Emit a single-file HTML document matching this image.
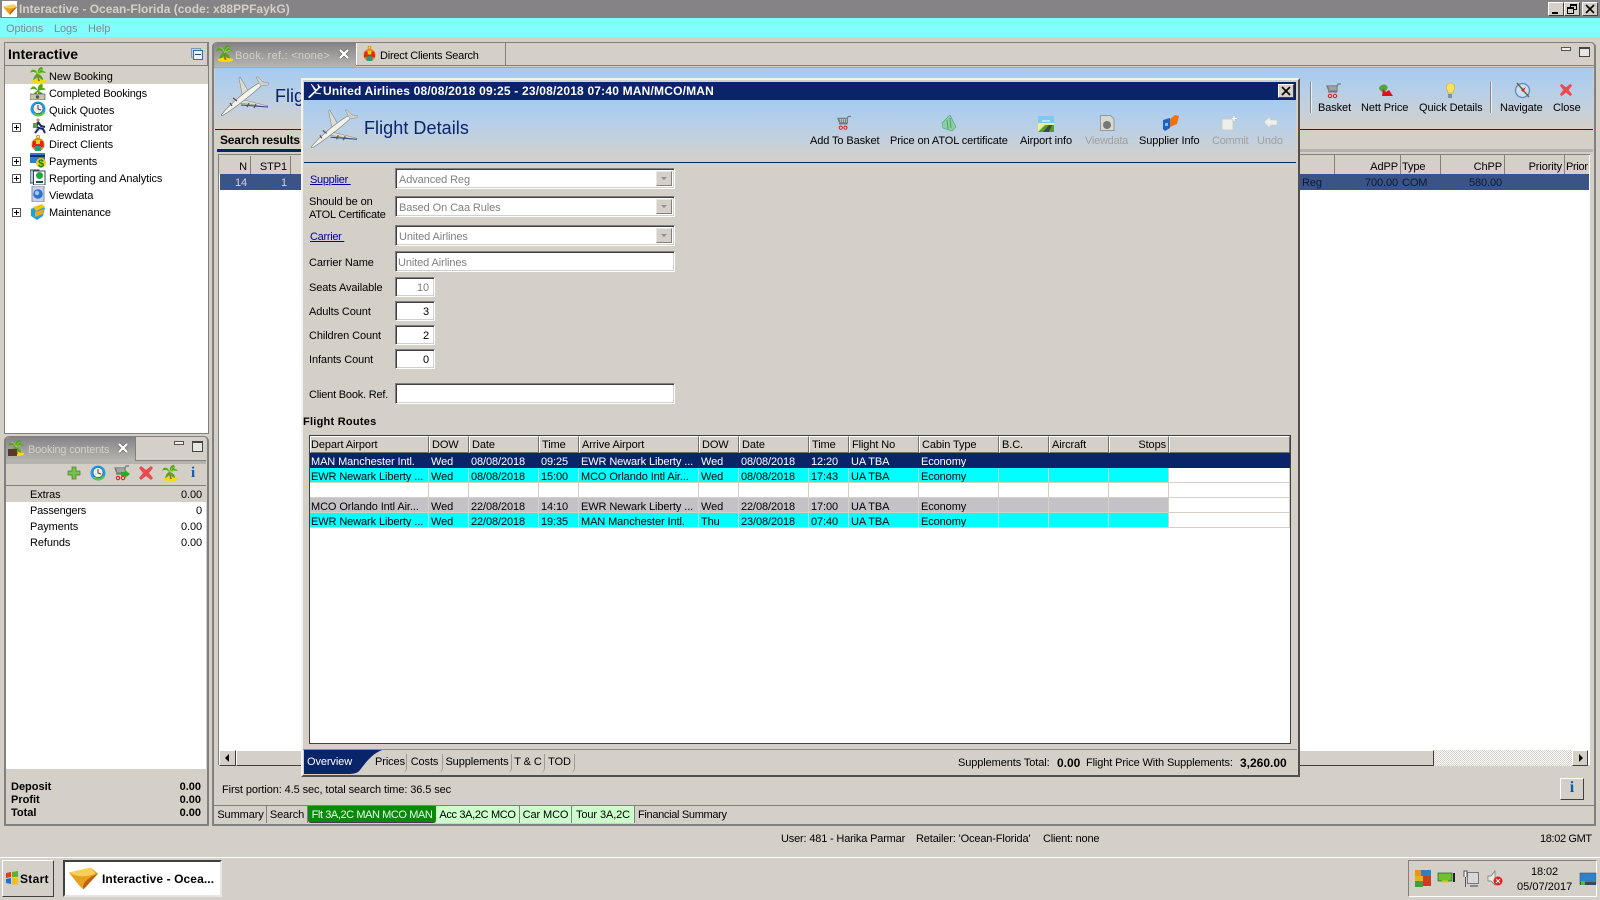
<!DOCTYPE html>
<html><head><meta charset="utf-8"><title>Interactive</title>
<style>
*{box-sizing:border-box}
html,body{margin:0;padding:0;width:1600px;height:900px;overflow:hidden;background:#d4d0c8;font:11px/14px "Liberation Sans",Arial,sans-serif;color:#000}
.a{position:absolute}
.t{position:absolute;white-space:nowrap;line-height:14px;font-size:11px;margin-top:1px;letter-spacing:-.1px}
.m0{margin-top:0}
.b{font-weight:bold;letter-spacing:0}
.r{text-align:right}
.g{color:#808080}
.l{color:#0000a0;text-decoration:underline}
svg{position:absolute;overflow:visible}
.in{position:absolute;background:#fff;border:1px solid;border-color:#808080 #fff #fff #808080;box-shadow:inset 1px 1px 0 #404040,inset -1px -1px 0 #d4d0c8}
.cb{position:absolute;background:#d4d0c8;border:1px solid;border-color:#e8e6e2 #808080 #808080 #e8e6e2;width:16px;height:15px}
.cb:after{content:"";position:absolute;left:4px;top:5px;border:3px solid transparent;border-top:3px solid #909090}
.pl{position:absolute;left:12px;width:9px;height:9px;border:1px solid #555;background:#fff}
.pl:before{content:"";position:absolute;left:1px;top:3px;width:5px;height:1px;background:#000}
.pl:after{content:"";position:absolute;left:3px;top:1px;width:1px;height:5px;background:#000}
.btn{position:absolute;background:#d4d0c8;border:1px solid;border-color:#fff #404040 #404040 #fff}
.hdr{position:absolute;background:linear-gradient(#a6caf0 0%,#b5cfe9 35%,#c6d0da 70%,#d4d0c8 100%)}
table{position:absolute;border-collapse:separate;border-spacing:0;table-layout:fixed}
th,td{font:11px "Liberation Sans",Arial,sans-serif;overflow:hidden;white-space:nowrap;text-align:left;letter-spacing:-.1px}
th{height:17px;background:#d4d0c8;border:1px solid;border-color:#fff #707070 #707070 #fff;font-weight:normal;padding:2px 0 0 0;line-height:13px}
th+th{padding-left:2px}
td{height:15px;border-right:1px solid #d4d0c8;border-bottom:1px solid #d4d0c8;background:#fff;padding:4px 0 0 1px;line-height:10px}
td+td{padding-left:2px}
tr.n td{background:#0a246a;color:#fff;border-color:#0a246a}
tr.c td{background:#0ff}
tr.s td{background:#c4c2c6}
tr td.w{background:#fff}
tr.n td.w{background:#0a246a}
.tab{position:absolute;top:806px;height:17px;line-height:18px;font-size:11px;text-align:center;white-space:nowrap;border-right:1px solid #808080;letter-spacing:-.1px}
.dt{position:absolute;top:754px;height:19px;line-height:16px;text-align:center;white-space:nowrap;border-right:1px solid #a09c94;border-radius:0 0 5px 0;letter-spacing:-.1px}
</style></head><body>
<svg width="0" height="0" style="position:absolute">
<defs>
<symbol id="palm" viewBox="0 0 16 16"><ellipse cx="9" cy="14" rx="7.500" ry="2" fill="#f8dc00"/><path d="M7.500 6l2.500 8H8L6.500 6z" fill="#a06a20"/><path d="M8 7C5 1 2 1 0 6c3-2 5-1 8 1zM8 7c-1-4 1-7 4-7 2 2 0 6-4 7zM8 7c3-4 6-4 8-1-2-.5-5 0-8 1zM8 7c-3 0-4 3-5 6 3-1 5-3 5-6zM8 7c3 1 5 3 5 6-3-1-5-3-5-6z" fill="#50a818"/><path d="M3 3c2-1 3 0 5 4M12 2c-2 1-3 2-4 5M14 5c-2 0-4 1-6 2" stroke="#a8d858" stroke-width=".6" fill="none"/></symbol>
<symbol id="palmm" viewBox="0 0 16 16"><path d="M9 6l1 5H8.500L7.500 6z" fill="#a06a20"/><path d="M8 7C5 1 2 1 0 6c3-2 5-1 8 1zM8 7c-1-4 1-7 4-7 2 2 0 6-4 7zM8 7c3-4 6-4 8-1-2-.5-5 0-8 1zM8 7c-3 0-4 2-4 4 2-1 4-2 4-4zM8 7c3 1 5 2 5 4-3-1-5-2-5-4z" fill="#50a818"/><rect x="0" y="10" width="15" height="6" fill="#c8c8a8" stroke="#444" stroke-width=".6"/><circle cx="7.500" cy="13" r="1.700" fill="#555"/></symbol>
<symbol id="clock" viewBox="0 0 16 16"><circle cx="8" cy="8" r="7.500" fill="#1c9cf0"/><circle cx="8" cy="7.500" r="5" fill="#eeeee4" stroke="#335" stroke-width=".5"/><path d="M8 4v4l3 1" fill="none" stroke="#444" stroke-width="1"/><path d="M3 12c3 5 9 4 12 0l-3-1-1 2c-2 1-4 0-5-1z" fill="#60c828"/></symbol>
<symbol id="gift" viewBox="0 0 16 16"><circle cx="8" cy="9.500" r="6.500" fill="#f08010"/><path d="M3 6h10l1 6H2z" fill="#e02810"/><rect x="5" y="11" width="6" height="5" fill="#20a080"/><circle cx="8" cy="1.800" r="1.500" fill="none" stroke="#e09000"/><path d="M6 5h4v4H6z" fill="#e8d020"/></symbol>
<symbol id="run" viewBox="0 0 16 16"><circle cx="7" cy="2" r="1.600" fill="#c89060"/><path d="M7 4L5 9l3 1-4 5M7 4l3 4 4 1M8 10l4 1 2 4" fill="none" stroke="#182860" stroke-width="2"/><rect x="2" y="5" width="4" height="5" fill="#60a040"/></symbol>
<symbol id="card" viewBox="0 0 16 16"><rect x="0" y="1" width="15" height="10" fill="#2a80d8"/><rect x="0" y="3" width="15" height="2" fill="#10306a"/><circle cx="11" cy="11" r="5" fill="#f0d020"/><text x="11" y="15" font-size="11" font-weight="bold" fill="#108020" text-anchor="middle" font-family="Liberation Sans">$</text></symbol>
<symbol id="rep" viewBox="0 0 16 16"><rect x="0" y="1" width="9" height="13" fill="#b8c8e0" stroke="#345"/><rect x="3.500" y="2" width="11.500" height="14" fill="#fff" stroke="#345"/><circle cx="9.500" cy="6.500" r="3.500" fill="#20a840"/><rect x="6" y="12" width="7" height="2" fill="#205040"/></symbol>
<symbol id="view" viewBox="0 0 16 16"><rect x="2" y="0" width="12" height="16" fill="#c8d0e8" stroke="#8090a8"/><circle cx="8" cy="8" r="4.800" fill="#3070d0"/><circle cx="7" cy="7" r="2.200" fill="#a0c8f0"/></symbol>
<symbol id="box" viewBox="0 0 16 16"><path d="M1 5l9-4 5 3-2 8-6 4-6-4z" fill="#20a0d8"/><path d="M3 3l9-3 3 3-9 4z" fill="#f0c020"/><path d="M5 8l9-3-1 5-8 3z" fill="#f0a818"/></symbol>
<symbol id="plane" viewBox="0 0 48 40"><path d="M29 18L19 1l-1 1 4 21zM23 24l24 6-1 1-27-4z" fill="#dcdcd4" stroke="#8a8a80" stroke-width=".6"/><path d="M0 39C10 27 28 12 40 6c2-1 3 0 2 2C33 17 14 32 1 40z" fill="#f2f2ea" stroke="#777" stroke-width=".6"/><path d="M38 7l-3-6 2 0 5 5 6 1-1 2-7 1z" fill="#d0d0c8" stroke="#8a8a80" stroke-width=".5"/><path d="M20 29L47 31" stroke="#2a4a80" stroke-width="1"/><path d="M11 30l-2-3M16 25l-4-3M28 27l-2 4M35 28l-2 4" stroke="#555" stroke-width="1.300"/></symbol>
<symbol id="planew" viewBox="0 0 16 16"><path d="M1 15L13 4l1 1L3 16zM8 8L4 1l1 0 5 6zM9 10l6 1v1l-7-1zM12 5l-1-4h1l2 3 2 0v1z" fill="#fff"/></symbol>
<symbol id="cart" viewBox="0 0 16 16"><path d="M1 3h10v5H3zM2 9h9M11 3l1-2h3" fill="none" stroke="#777" stroke-width="1.300"/><path d="M3 4v4M5 4v4M7 4v4M9 4v4" stroke="#777"/><circle cx="4" cy="13" r="1.700" fill="none" stroke="#e01010"/><circle cx="9" cy="13" r="1.700" fill="none" stroke="#e01010"/></symbol>
<symbol id="x" viewBox="0 0 16 16"><path d="M3 1l5 4 5-4 2 2-4 5 4 5-2 2-5-4-5 4-2-2 4-5-4-5z" fill="#ec4a50"/></symbol>
<symbol id="plus" viewBox="0 0 16 16"><path d="M6 2h4v4h4v4h-4v4H6v-4H2V6h4z" fill="#78c048" stroke="#4a7a30" stroke-width=".7"/></symbol>
<symbol id="logo" viewBox="0 0 24 18"><path d="M0 4l18-4 6 5-12 13C8 15 4 9 0 4z" fill="#e8a020"/><path d="M0 4l18-4 4 5C15 8 7 8 0 4z" fill="#f8d058"/><path d="M12 18C10 13 16 8 24 5z" fill="#c06010"/></symbol>
</defs></svg>

<!-- title bar -->
<div class="a" style="left:0;top:0;width:1600px;height:18px;background:#858385"></div>
<div class="a" style="left:2px;top:1px;width:15px;height:16px;background:#fff"></div>
<svg style="left:3px;top:4px" width="14" height="11"><use href="#logo"/></svg>
<div class="t b m0" style="left:19px;top:2px;color:#d4d0c8;font-size:12px">Interactive - Ocean-Florida (code: x88PPFaykG)</div>
<div class="btn" style="left:1548px;top:2px;width:16px;height:14px"><div class="a" style="left:3px;top:9px;width:6px;height:2px;background:#000"></div></div>
<div class="btn" style="left:1564px;top:2px;width:16px;height:14px"><div class="a" style="left:5px;top:1px;width:7px;height:6px;border:1px solid #000;border-top-width:2px"></div><div class="a" style="left:2px;top:4px;width:7px;height:7px;border:1px solid #000;border-top-width:2px;background:#d4d0c8"></div></div>
<div class="btn" style="left:1582px;top:2px;width:16px;height:14px"><svg style="left:3px;top:2px" width="8" height="8"><path d="M0 0L8 8M8 0L0 8" stroke="#000" stroke-width="1.600"/></svg></div>
<!-- menu -->
<div class="a" style="left:0;top:18px;width:1600px;height:19px;background:#80ffff"></div>
<div class="t" style="left:6px;top:21px;color:#7f8a8a">Options</div>
<div class="t" style="left:54px;top:21px;color:#7f8a8a">Logs</div>
<div class="t" style="left:88px;top:21px;color:#7f8a8a">Help</div>

<!-- left panel -->
<div class="a" style="left:4px;top:42px;width:205px;height:392px;border:1px solid #808080;border-width:1px 2px 2px 1px;background:#d4d0c8"></div>
<div class="a" style="left:5px;top:65px;width:203px;height:1px;background:#808080"></div>
<div class="t b m0" style="left:8px;top:46px;font-size:14px;line-height:16px">Interactive</div>
<div class="a" style="left:191px;top:48px;width:10px;height:10px;border:1px solid #7a9ac0"></div>
<div class="a" style="left:193px;top:50px;width:10px;height:10px;border:1px solid #3a6aa0;background:#e8f0f8"><div class="a" style="left:1px;top:3px;width:6px;height:1px;background:#304060"></div></div>
<div class="a" style="left:5px;top:66px;width:203px;height:367px;background:#fff"></div>
<div class="a" style="left:5px;top:66px;width:203px;height:18px;background:#d4d0c8"></div>
<svg style="left:30px;top:67px" width="16" height="16"><use href="#palm"/></svg><div class="t" style="left:49px;top:69px">New Booking</div>
<svg style="left:30px;top:84px" width="16" height="16"><use href="#palmm"/></svg><div class="t" style="left:49px;top:86px;letter-spacing:-.2px">Completed Bookings</div>
<svg style="left:30px;top:101px" width="16" height="16"><use href="#clock"/></svg><div class="t" style="left:49px;top:103px">Quick Quotes</div>
<div class="pl" style="top:123px"></div><svg style="left:31px;top:118px" width="16" height="16"><use href="#run"/></svg><div class="t" style="left:49px;top:120px">Administrator</div>
<svg style="left:30px;top:135px" width="16" height="16"><use href="#gift"/></svg><div class="t" style="left:49px;top:137px">Direct Clients</div>
<div class="pl" style="top:157px"></div><svg style="left:30px;top:152px" width="16" height="16"><use href="#card"/></svg><div class="t" style="left:49px;top:154px">Payments</div>
<div class="pl" style="top:174px"></div><svg style="left:30px;top:169px" width="16" height="16"><use href="#rep"/></svg><div class="t" style="left:49px;top:171px">Reporting and Analytics</div>
<svg style="left:30px;top:186px" width="16" height="16"><use href="#view"/></svg><div class="t" style="left:49px;top:188px">Viewdata</div>
<div class="pl" style="top:208px"></div><svg style="left:30px;top:204px" width="16" height="16"><use href="#box"/></svg><div class="t" style="left:49px;top:205px">Maintenance</div>

<!-- booking contents panel -->
<div class="a" style="left:4px;top:436px;width:205px;height:390px;border:1px solid #808080;border-width:1px 2px 2px 2px;border-radius:5px 5px 0 0;background:#d4d0c8"></div>
<div class="a" style="left:6px;top:437px;width:129px;height:24px;background:linear-gradient(#858385,#b8b6b2);border-radius:4px 0 0 0"></div>
<div class="a" style="left:6px;top:461px;width:200px;height:3px;background:#b4b2ae"></div>
<div class="a" style="left:135px;top:437px;width:1px;height:24px;background:#808080"></div>
<div class="a" style="left:136px;top:460px;width:70px;height:1px;background:#808080"></div>
<svg style="left:8px;top:440px" width="16" height="16"><use href="#palm"/></svg><div class="a" style="left:8px;top:449px;width:9px;height:7px;background:#5a3a2a"></div>
<div class="t" style="left:28px;top:442px;color:#d4d0c8;letter-spacing:-.2px">Booking contents</div>
<svg style="left:118px;top:443px" width="10" height="10"><path d="M1 1L9 9M9 1L1 9" stroke="#555" stroke-width="3.600"/><path d="M1 1L9 9M9 1L1 9" stroke="#fff" stroke-width="2.400"/></svg>
<div class="a" style="left:174px;top:441px;width:10px;height:4px;border:1px solid #555;background:#eee"></div>
<div class="a" style="left:192px;top:441px;width:11px;height:11px;border:1px solid #444;border-top-width:2px;background:#e8e6e2"></div>
<svg style="left:66px;top:465px" width="16" height="16"><use href="#plus"/></svg>
<svg style="left:90px;top:465px" width="16" height="16"><use href="#clock"/></svg>
<svg style="left:114px;top:465px" width="16" height="16"><use href="#cart"/></svg><svg style="left:121px;top:470px" width="9" height="8"><path d="M0 2h4V0l5 4-5 4V6H0z" fill="#20b020"/></svg>
<svg style="left:138px;top:465px" width="16" height="16"><use href="#x"/></svg>
<svg style="left:162px;top:465px" width="16" height="16"><use href="#palm"/></svg>
<div class="t b" style="left:191px;top:465px;color:#0a5ab0;font-size:15px;font-family:'Liberation Serif',serif">i</div>
<div class="a" style="left:6px;top:485px;width:200px;height:1px;background:#808080"></div>
<div class="a" style="left:6px;top:486px;width:200px;height:283px;background:#fff"></div>
<div class="a" style="left:6px;top:486px;width:200px;height:16px;background:#d4d0c8"></div>
<div class="t" style="left:30px;top:487px">Extras</div><div class="t r" style="left:142px;width:60px;top:487px">0.00</div>
<div class="t" style="left:30px;top:503px;letter-spacing:-.2px">Passengers</div><div class="t r" style="left:142px;width:60px;top:503px">0</div>
<div class="t" style="left:30px;top:519px">Payments</div><div class="t r" style="left:142px;width:60px;top:519px">0.00</div>
<div class="t" style="left:30px;top:535px">Refunds</div><div class="t r" style="left:142px;width:60px;top:535px">0.00</div>
<div class="t b" style="left:11px;top:779px">Deposit</div><div class="t b r" style="left:141px;width:60px;top:779px">0.00</div>
<div class="t b" style="left:11px;top:792px">Profit</div><div class="t b r" style="left:141px;width:60px;top:792px">0.00</div>
<div class="t b" style="left:11px;top:805px">Total</div><div class="t b r" style="left:141px;width:60px;top:805px">0.00</div>

<!-- main panel -->
<div class="a" style="left:212px;top:42px;width:1384px;height:784px;border:1px solid #808080;border-width:1px 2px 2px 2px;border-radius:5px 5px 0 0;background:#d4d0c8"></div>
<div class="a" style="left:214px;top:65px;width:1380px;height:1px;background:#808080"></div>
<div class="a" style="left:214px;top:43px;width:142px;height:24px;background:linear-gradient(#858385,#b8b6b2);border-radius:4px 0 0 0"></div>
<div class="a" style="left:214px;top:67px;width:1380px;height:1px;background:#a8a6a2"></div>
<svg style="left:216px;top:45px" width="17" height="17"><use href="#palm"/></svg>
<div class="t" style="left:235px;top:48px;color:#d4d0c8;letter-spacing:.25px">Book. ref.: &lt;none&gt;</div>
<svg style="left:339px;top:49px" width="10" height="10"><path d="M1 1L9 9M9 1L1 9" stroke="#555" stroke-width="3.600"/><path d="M1 1L9 9M9 1L1 9" stroke="#fff" stroke-width="2.400"/></svg>
<div class="a" style="left:356px;top:43px;width:150px;height:22px;border-left:1px solid #fff;border-right:1px solid #808080;background:#d4d0c8"></div>
<svg style="left:362px;top:46px" width="15" height="15"><use href="#gift"/></svg>
<div class="t" style="left:380px;top:48px;letter-spacing:-.22px">Direct Clients Search</div>
<div class="a" style="left:1561px;top:47px;width:10px;height:4px;border:1px solid #555;background:#eee"></div>
<div class="a" style="left:1579px;top:47px;width:11px;height:10px;border:1px solid #444;border-top-width:2px;background:#e8e6e2"></div>

<div class="hdr" style="left:215px;top:68px;width:1378px;height:61px"></div>
<div class="a" style="left:215px;top:129px;width:1378px;height:1px;background:#0a246a"></div>
<svg style="left:221px;top:76px" width="48" height="40"><use href="#plane"/></svg>
<div class="t m0" style="left:275px;top:86px;font-size:18px;line-height:20px;color:#0a246a;letter-spacing:0">Flig</div>
<div class="a" style="left:1310px;top:82px;width:2px;height:31px;background:#888;border-right:1px solid #eee"></div>
<div class="a" style="left:1490px;top:82px;width:2px;height:31px;background:#888;border-right:1px solid #eee"></div>
<svg style="left:1326px;top:83px" width="16" height="16"><use href="#cart"/></svg>
<div class="t" style="left:1318px;top:100px">Basket</div>
<svg style="left:1377px;top:83px" width="16" height="16"><path d="M2 6c0-4 6-6 8-3 2 2-1 6-5 6z" fill="#58a040"/><path d="M6 6l3 3 3-2 4 6H5z" fill="#e01018"/></svg>
<div class="t" style="left:1361px;top:100px">Nett Price</div>
<svg style="left:1442px;top:83px" width="16" height="16"><path d="M8 0a4.500 4.500 0 014 7l-1 3H6L5 7a4.500 4.500 0 013-7z" fill="#f8e060" stroke="#c8a040" stroke-width=".6"/><rect x="6" y="11" width="4" height="4" fill="#8090a0"/></svg>
<div class="t" style="left:1419px;top:100px">Quick Details</div>
<svg style="left:1514px;top:82px" width="17" height="17"><circle cx="8.500" cy="8.500" r="7" fill="#c8e0f4" stroke="#6088b0" stroke-width="1.300"/><path d="M3 1l12 14" stroke="#7a6040" stroke-width="1.500"/><path d="M12 5L7 8l2 2z" fill="#e02020"/></svg>
<div class="t" style="left:1500px;top:100px">Navigate</div>
<svg style="left:1559px;top:83px" width="14" height="14"><use href="#x"/></svg>
<div class="t" style="left:1553px;top:100px">Close</div>
<div class="t b m0" style="left:220px;top:133px;font-size:12px;letter-spacing:-.2px">Search results</div>
<div class="a" style="left:217px;top:149px;width:1376px;height:3px;background:linear-gradient(90deg,#0a246a 0,#0a246a 8%,#b4b2ae 78%)"></div>

<!-- behind grid -->
<div class="a" style="left:218px;top:154px;width:1372px;height:611px;background:#fff;border:1px solid #808080;border-right:0;border-bottom:0"></div>
<div class="a" style="left:219px;top:155px;width:1370px;height:19px;background:#d4d0c8"></div>
<div class="a" style="left:250px;top:156px;width:1px;height:18px;background:#808080"></div>
<div class="a" style="left:290px;top:156px;width:1px;height:18px;background:#808080"></div>
<div class="t r" style="left:220px;width:27px;top:159px">N</div>
<div class="t r" style="left:252px;width:35px;top:159px">STP1</div>
<div class="a" style="left:1334px;top:155px;width:1px;height:19px;background:#808080"></div>
<div class="a" style="left:1400px;top:155px;width:1px;height:19px;background:#808080"></div>
<div class="a" style="left:1440px;top:155px;width:1px;height:19px;background:#808080"></div>
<div class="a" style="left:1504px;top:155px;width:1px;height:19px;background:#808080"></div>
<div class="a" style="left:1564px;top:155px;width:1px;height:19px;background:#808080"></div>
<div class="t r" style="left:1340px;width:58px;top:159px">AdPP</div>
<div class="t" style="left:1402px;top:159px">Type</div>
<div class="t r" style="left:1445px;width:57px;top:159px">ChPP</div>
<div class="t r" style="left:1505px;width:57px;top:159px">Priority</div>
<div class="t" style="left:1566px;top:159px;letter-spacing:-.3px">Prior</div>
<div class="a" style="left:220px;top:174px;width:1369px;height:16px;background:#3b5488"></div>
<div class="t r" style="left:220px;width:27px;top:175px;color:#d4d0e0">14</div>
<div class="t r" style="left:252px;width:35px;top:175px;color:#d4d0e0">1</div>
<div class="t" style="left:1302px;top:175px;color:#101830">Reg</div>
<div class="t r" style="left:1340px;width:58px;top:175px;color:#101830">700.00</div>
<div class="t" style="left:1402px;top:175px;color:#101830">COM</div>
<div class="t r" style="left:1445px;width:57px;top:175px;color:#101830">580.00</div>

<!-- scrollbar -->
<div class="a" style="left:219px;top:750px;width:1369px;height:16px;background:#ecebe8;background-image:repeating-conic-gradient(#d4d0c8 0 25%,#fff 0 50%);background-size:2px 2px"></div>
<div class="btn" style="left:219px;top:750px;width:17px;height:16px"><div class="a" style="left:5px;top:3px;border:4px solid transparent;border-right:4px solid #000;border-left:0"></div></div>
<div class="btn" style="left:236px;top:750px;width:1198px;height:16px"></div>
<div class="btn" style="left:1572px;top:750px;width:16px;height:16px"><div class="a" style="left:6px;top:3px;border:4px solid transparent;border-left:4px solid #000;border-right:0"></div></div>

<div class="t" style="left:222px;top:782px">First portion: 4.5 sec, total search time: 36.5 sec</div>
<div class="btn" style="left:1560px;top:778px;width:24px;height:22px"><div class="t b m0" style="left:0;width:22px;text-align:center;top:2px;font-size:16px;color:#0a5ab0;font-family:'Liberation Serif',serif">i</div></div>
<div class="a" style="left:214px;top:805px;width:1380px;height:1px;background:#808080"></div>
<div class="tab" style="left:215px;width:52px">Summary</div>
<div class="tab" style="left:267px;width:41px">Search</div>
<div class="tab" style="left:308px;width:128px;background:#0a8a0a;color:#e8ffe8;letter-spacing:-.42px;border-radius:0 0 3px 3px;border-right:0;border-bottom:1px solid #404040">Flt 3A,2C MAN MCO MAN</div>
<div class="tab" style="left:436px;width:84px;background:#ccffcc;letter-spacing:-.35px">Acc 3A,2C MCO</div>
<div class="tab" style="left:520px;width:52px;background:#ccffcc">Car MCO</div>
<div class="tab" style="left:572px;width:63px;background:#ccffcc">Tour 3A,2C</div>
<div class="tab" style="left:635px;width:94px;border-right:0;letter-spacing:-.32px;text-align:left;padding-left:3px">Financial Summary</div>

<!-- dialog -->
<div class="a" style="left:301px;top:78px;width:999px;height:699px;background:#d4d0c8;border:1px solid;border-width:2px 2px 2px 2px;border-color:#f4f2ee #505050 #505050 #f4f2ee;box-shadow:inset 1px 1px 0 #d4d0c8"></div>
<div class="a" style="left:304px;top:82px;width:992px;height:18px;background:#0a246a"></div>
<svg style="left:307px;top:83px" width="15" height="15"><use href="#planew"/></svg>
<div class="t b m0" style="left:323px;top:84px;color:#fff;font-size:12px;letter-spacing:.19px">United Airlines 08/08/2018 09:25 - 23/08/2018 07:40 MAN/MCO/MAN</div>
<div class="btn" style="left:1278px;top:84px;width:16px;height:14px"><svg style="left:3px;top:2px" width="8" height="8"><path d="M0 0L8 8M8 0L0 8" stroke="#000" stroke-width="1.600"/></svg></div>
<div class="hdr" style="left:304px;top:100px;width:992px;height:62px"></div>
<div class="a" style="left:304px;top:162px;width:992px;height:1px;background:#0a246a"></div>
<svg style="left:311px;top:109px" width="47" height="39"><use href="#plane"/></svg>
<div class="t m0" style="left:364px;top:118px;font-size:18px;line-height:20px;color:#0a246a;letter-spacing:.06px">Flight Details</div>
<svg style="left:837px;top:115px" width="15" height="16"><use href="#cart"/></svg>
<div class="t" style="left:810px;top:133px">Add To Basket</div>
<svg style="left:941px;top:115px" width="16" height="16"><path d="M9 0l6 12-4 4-9-3-1-5z" fill="#88d0a0" stroke="#50a070" stroke-width=".6"/><path d="M9 3l1 10M6 5l1 9" stroke="#50a070"/></svg>
<div class="t" style="left:890px;top:133px">Price on ATOL certificate</div>
<svg style="left:1038px;top:116px" width="16" height="16"><rect width="16" height="16" fill="#f0f080"/><rect width="16" height="7" fill="#80c8f0"/><path d="M0 16L7 9h9v7z" fill="#50a030"/><path d="M5 16l6-7h3l-3 7z" fill="#444"/><path d="M4 5h8" stroke="#fff"/></svg>
<div class="t" style="left:1020px;top:133px">Airport info</div>
<svg style="left:1100px;top:115px" width="15" height="16"><path d="M.5.500h10l3.500 3.500v11.500H.5z" fill="#d8d8d4" stroke="#999"/><circle cx="7" cy="10" r="4" fill="#777"/></svg>
<div class="t" style="left:1085px;top:133px;color:#a0a0a0;letter-spacing:-.25px">Viewdata</div>
<svg style="left:1162px;top:115px" width="17" height="16"><path d="M1 5l7-2v10l-5 3-2-2z" fill="#2060c0"/><path d="M8 4l5-4 4 1-2 8-7 3z" fill="#f07010"/><path d="M3 8h3v3H3z" fill="#80c0f0"/></svg>
<div class="t" style="left:1139px;top:133px">Supplier Info</div>
<svg style="left:1222px;top:116px" width="15" height="15"><rect y="3" width="11" height="11" fill="#eeeeea" stroke="#ccc"/><path d="M12 0v5M10 2.500h5" stroke="#fff"/></svg>
<div class="t" style="left:1212px;top:133px;color:#a0a0a0;letter-spacing:-.25px">Commit</div>
<svg style="left:1264px;top:117px" width="13" height="11"><path d="M0 5l6-5v3h7v5H6v3z" fill="#eeeeea" stroke="#ccc" stroke-width=".5"/></svg>
<div class="t" style="left:1257px;top:133px;color:#a0a0a0">Undo</div>

<div class="t l" style="left:310px;top:172px;letter-spacing:-.3px">Supplier&nbsp;</div>
<div class="in" style="left:395px;top:168px;width:280px;height:21px"><div class="cb" style="right:2px;top:2px"></div></div>
<div class="t g" style="left:399px;top:172px">Advanced Reg</div>
<div class="t" style="left:309px;top:194px">Should be on</div>
<div class="t" style="left:309px;top:207px;letter-spacing:-.2px">ATOL Certificate</div>
<div class="in" style="left:395px;top:196px;width:280px;height:21px"><div class="cb" style="right:2px;top:2px"></div></div>
<div class="t g" style="left:399px;top:200px">Based On Caa Rules</div>
<div class="t l" style="left:310px;top:229px;letter-spacing:-.3px">Carrier&nbsp;</div>
<div class="in" style="left:395px;top:225px;width:280px;height:21px"><div class="cb" style="right:2px;top:2px"></div></div>
<div class="t g" style="left:399px;top:229px">United Airlines</div>
<div class="t" style="left:309px;top:255px">Carrier Name</div>
<div class="in" style="left:395px;top:251px;width:280px;height:21px"></div>
<div class="t g" style="left:398px;top:255px">United Airlines</div>
<div class="t" style="left:309px;top:280px">Seats Available</div>
<div class="in" style="left:395px;top:277px;width:40px;height:20px"></div>
<div class="t r g" style="left:397px;width:32px;top:280px">10</div>
<div class="t" style="left:309px;top:304px">Adults Count</div>
<div class="in" style="left:395px;top:301px;width:40px;height:20px"></div>
<div class="t r" style="left:397px;width:32px;top:304px">3</div>
<div class="t" style="left:309px;top:328px">Children Count</div>
<div class="in" style="left:395px;top:325px;width:40px;height:20px"></div>
<div class="t r" style="left:397px;width:32px;top:328px">2</div>
<div class="t" style="left:309px;top:352px">Infants Count</div>
<div class="in" style="left:395px;top:349px;width:40px;height:20px"></div>
<div class="t r" style="left:397px;width:32px;top:352px">0</div>
<div class="t" style="left:309px;top:387px;letter-spacing:-.2px">Client Book. Ref.</div>
<div class="in" style="left:395px;top:383px;width:280px;height:21px"></div>
<div class="t b" style="left:303px;top:414px;letter-spacing:.25px">Flight Routes</div>

<!-- routes grid -->
<div class="a" style="left:309px;top:435px;width:982px;height:309px;background:#fff;border:1px solid #404040"></div>
<table style="left:310px;top:436px;width:980px">
<colgroup><col style="width:119px"><col style="width:40px"><col style="width:70px"><col style="width:40px"><col style="width:120px"><col style="width:40px"><col style="width:70px"><col style="width:40px"><col style="width:70px"><col style="width:80px"><col style="width:50px"><col style="width:60px"><col style="width:60px"><col style="width:121px"></colgroup>
<tr><th>Depart Airport</th><th>DOW</th><th>Date</th><th>Time</th><th>Arrive Airport</th><th>DOW</th><th>Date</th><th>Time</th><th>Flight No</th><th>Cabin Type</th><th>B.C.</th><th>Aircraft</th><th style="text-align:right;padding-right:2px">Stops</th><th></th></tr>
<tr class="n"><td>MAN Manchester Intl.</td><td>Wed</td><td>08/08/2018</td><td>09:25</td><td>EWR Newark Liberty ...</td><td>Wed</td><td>08/08/2018</td><td>12:20</td><td>UA TBA</td><td>Economy</td><td></td><td></td><td></td><td class="w"></td></tr>
<tr class="c"><td>EWR Newark Liberty ...</td><td>Wed</td><td>08/08/2018</td><td>15:00</td><td>MCO Orlando Intl Air...</td><td>Wed</td><td>08/08/2018</td><td>17:43</td><td>UA TBA</td><td>Economy</td><td></td><td></td><td></td><td class="w"></td></tr>
<tr><td></td><td></td><td></td><td></td><td></td><td></td><td></td><td></td><td></td><td></td><td></td><td></td><td></td><td></td></tr>
<tr class="s"><td>MCO Orlando Intl Air...</td><td>Wed</td><td>22/08/2018</td><td>14:10</td><td>EWR Newark Liberty ...</td><td>Wed</td><td>22/08/2018</td><td>17:00</td><td>UA TBA</td><td>Economy</td><td></td><td></td><td></td><td class="w"></td></tr>
<tr class="c"><td>EWR Newark Liberty ...</td><td>Wed</td><td>22/08/2018</td><td>19:35</td><td>MAN Manchester Intl.</td><td>Thu</td><td>23/08/2018</td><td>07:40</td><td>UA TBA</td><td>Economy</td><td></td><td></td><td></td><td class="w"></td></tr>
</table>

<!-- dialog tabs -->
<div class="a" style="left:303px;top:749px;width:994px;height:1px;background:#908c84"></div>
<svg style="left:304px;top:750px" width="78" height="24"><path d="M0 0H78C68 4 62 12 56 20 54 23 50 24 44 24H0z" fill="#0a246a"/></svg>
<div class="t" style="left:307px;top:754px;color:#fff">Overview</div>
<div class="dt" style="left:371px;width:36px;padding-left:3px">Prices</div>
<div class="dt" style="left:407px;width:36px">Costs</div>
<div class="dt" style="left:443px;width:69px">Supplements</div>
<div class="dt" style="left:512px;width:33px">T &amp; C</div>
<div class="dt" style="left:545px;width:30px">TOD</div>
<div class="t" style="left:958px;top:755px">Supplements Total:</div>
<div class="t b" style="left:1057px;top:755px;font-size:12px">0.00</div>
<div class="t" style="left:1086px;top:755px;letter-spacing:-.12px">Flight Price With Supplements:</div>
<div class="t b" style="left:1240px;top:755px;font-size:12px">3,260.00</div>

<!-- status -->
<div class="t" style="left:781px;top:831px;letter-spacing:-.17px">User: 481 - Harika Parmar</div>
<div class="t" style="left:916px;top:831px;letter-spacing:-.14px">Retailer: 'Ocean-Florida'</div>
<div class="t" style="left:1043px;top:831px;letter-spacing:-.2px">Client: none</div>
<div class="t" style="left:1540px;top:831px;letter-spacing:-.36px">18:02 GMT</div>

<!-- taskbar -->
<div class="a" style="left:0;top:857px;width:1600px;height:1px;background:#fff"></div>
<div class="btn" style="left:2px;top:860px;width:52px;height:37px"></div>
<svg style="left:5px;top:871px" width="14" height="14"><path d="M1 2l5-1v5L1 7z" fill="#e04020"/><path d="M7 1l6-1v6H7z" fill="#60b030"/><path d="M1 8l5-1v6l-5-1z" fill="#2070d0"/><path d="M7 7h6v6l-6 1z" fill="#f0c020"/></svg>
<div class="t b m0" style="left:20px;top:872px;font-size:12px;letter-spacing:.3px">Start</div>
<div class="a" style="left:63px;top:860px;width:159px;height:37px;background:#fff;border:2px solid;border-color:#404040 #e8e6e2 #e8e6e2 #404040"></div>
<svg style="left:69px;top:867px" width="29" height="23"><use href="#logo"/></svg>
<div class="t b m0" style="left:102px;top:872px;font-size:12px;letter-spacing:.1px">Interactive - Ocea...</div>
<div class="a" style="left:1408px;top:860px;width:189px;height:37px;border:1px solid;border-color:#808080 #fff #fff #808080"></div>
<svg style="left:1415px;top:870px" width="16" height="17"><rect width="6" height="6" fill="#f09020"/><rect x="6" width="10" height="6" fill="#3080c0"/><rect y="6" width="8" height="5" fill="#e8b020"/><rect x="8" y="6" width="8" height="5" fill="#c84020"/><rect y="11" width="8" height="6" fill="#40a040"/><rect x="8" y="11" width="8" height="5" fill="#e03020"/></svg>
<svg style="left:1438px;top:873px" width="17" height="11"><rect width="14" height="8" fill="#70c030" stroke="#206020" stroke-width=".7"/><path d="M4 8.500h6" stroke="#e0c020" stroke-width="2"/><path d="M15 0h2v9h-2z" fill="#222"/></svg>
<svg style="left:1463px;top:870px" width="17" height="18"><rect x="4.500" y="2.500" width="11" height="11" fill="#d8d8d8" stroke="#777"/><path d="M7 16h8" stroke="#888" stroke-width="2"/><path d="M1 7V1h3v6M2.500 7v10" fill="#f8f8f8" stroke="#555"/></svg>
<svg style="left:1487px;top:870px" width="16" height="17"><path d="M1 6h3l4-5v14L4 11H1z" fill="#e8e8e0" stroke="#777" stroke-width=".7"/><circle cx="11" cy="11" r="4.500" fill="#e02020"/><path d="M9 9l4 4M13 9l-4 4" stroke="#fff"/></svg>
<div class="t" style="left:1531px;top:864px">18:02</div>
<div class="t" style="left:1517px;top:879px;letter-spacing:.02px">05/07/2017</div>
<svg style="left:1580px;top:873px" width="16" height="14"><rect width="16" height="11" fill="#3080d0" stroke="#456" stroke-width=".6"/><rect y="9" width="16" height="3" fill="#445"/><rect x="1" y="8" width="4" height="4" fill="#48c048"/></svg>
</body></html>
